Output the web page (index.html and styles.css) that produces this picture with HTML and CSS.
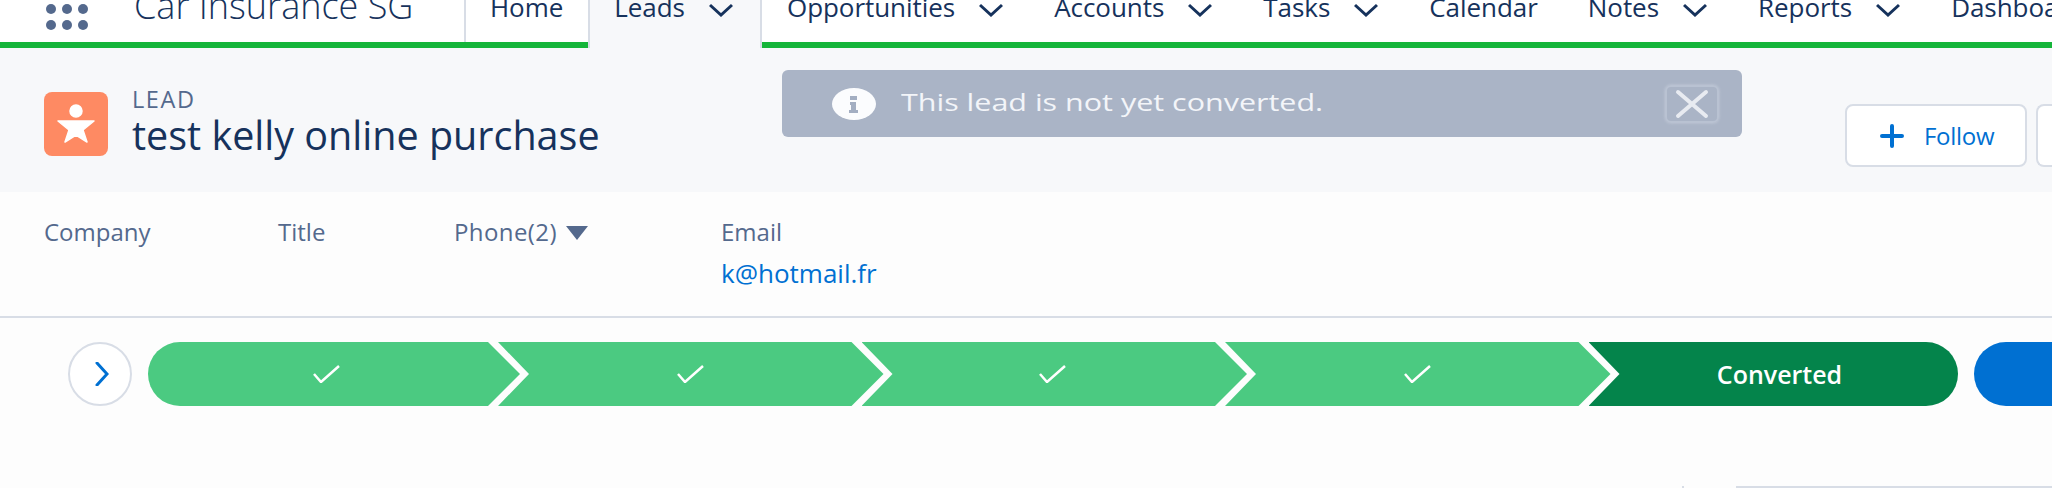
FILE: index.html
```html
<!DOCTYPE html>
<html lang="en">
<head>
  <meta charset="UTF-8">
  <title>test kelly online purchase | Lead</title>
  <link rel="stylesheet" href="styles.css">
</head>
<body>
  <nav class="topnav">
    <div class="launcher">
      <span></span><span></span><span></span><span></span><span></span><span></span>
    </div>
    <div class="app-name">Car Insurance SG</div>
    <ul class="tabs">
      <li class="tab tab-first">Home</li>
      <li class="tab tab-active">Leads<svg class="chev" viewBox="0 0 24 14"><path d="M1 2l11 10L23 2"/></svg></li>
      <li class="tab">Opportunities<svg class="chev" viewBox="0 0 24 14"><path d="M1 2l11 10L23 2"/></svg></li>
      <li class="tab">Accounts<svg class="chev" viewBox="0 0 24 14"><path d="M1 2l11 10L23 2"/></svg></li>
      <li class="tab">Tasks<svg class="chev" viewBox="0 0 24 14"><path d="M1 2l11 10L23 2"/></svg></li>
      <li class="tab">Calendar</li>
      <li class="tab">Notes<svg class="chev" viewBox="0 0 24 14"><path d="M1 2l11 10L23 2"/></svg></li>
      <li class="tab">Reports<svg class="chev" viewBox="0 0 24 14"><path d="M1 2l11 10L23 2"/></svg></li>
      <li class="tab">Dashboards</li>
    </ul>
  </nav>

  <header class="record-head">
    <div class="lead-icon">
      <svg viewBox="0 0 64 64"><circle cx="32" cy="19" r="6"/><path d="M14 29h36l-11 9 4 12-11-7-11 7 4-12z"/></svg>
    </div>
    <div class="record-title">
      <div class="record-type">LEAD</div>
      <h1>test kelly online purchase</h1>
    </div>
    <div class="actions">
      <button class="btn btn-follow"><svg class="plus" viewBox="0 0 24 24"><path d="M12 2v20M2 12h20"/></svg>Follow</button>
      <button class="btn btn-cut"></button>
    </div>
  </header>

  <div class="toast">
    <svg class="toast-icon" viewBox="0 0 44 32"><ellipse cx="22" cy="16" rx="22" ry="16" fill="#fbfcfe"/><path d="M18 8h7v4h-7zM18 14h6v8h2v3h-9v-3h2v-5h-1z" fill="#a3aec2"/></svg>
    <div class="toast-text"><span>This lead is not yet converted.</span></div>
    <div class="toast-close">
      <svg viewBox="0 0 50 34"><path d="M11 5l28 24M39 5L11 29"/></svg>
    </div>
  </div>

  <section class="fields">
    <div class="field field-company"><div class="field-label">Company</div></div>
    <div class="field field-title"><div class="field-label">Title</div></div>
    <div class="field field-phone"><div class="field-label">Phone(2)<span class="caret"></span></div></div>
    <div class="field"><div class="field-label">Email</div><a class="field-value">k@hotmail.fr</a></div>
  </section>

  <section class="path-row">
    <div class="path-toggle">
      <svg viewBox="0 0 14 24"><path d="M2 1l10 11L2 23"/></svg>
    </div>
    <div class="path">
      <div class="step step-first"><svg class="check" viewBox="0 0 27 18"><path d="M1 9l7 8L26 1"/></svg></div>
      <div class="step"><svg class="check" viewBox="0 0 27 18"><path d="M1 9l7 8L26 1"/></svg></div>
      <div class="step step-third"><svg class="check" viewBox="0 0 27 18"><path d="M1 9l7 8L26 1"/></svg></div>
      <div class="step"><svg class="check" viewBox="0 0 27 18"><path d="M1 9l7 8L26 1"/></svg></div>
      <div class="step step-current">Converted</div>
    </div>
    <button class="path-action"></button>
  </section>

  <div class="bottom-edge">
    <span class="edge-tick"></span>
    <span class="edge-bar"></span>
  </div>
</body>
</html>
```

FILE: styles.css
```css
/* Reset */
* {
  box-sizing: border-box;
  margin: 0;
  padding: 0;
}
html, body {
  height: 488px;
  overflow: hidden;
}
body {
  position: relative;
  display: flex;
  flex-direction: column;
  background-color: #fdfdfd;
  color: #16325c;
  font-family: "Open Sans", Arial, sans-serif;
}

/* Top navigation */
.topnav {
  display: flex;
  flex: none;
  height: 48px;
  padding-left: 46px;
  background-color: #fff;
  border-bottom: 6px solid #15b53a;
}
.launcher {
  display: grid;
  grid-template-columns: repeat(3, 10px);
  grid-auto-rows: 10px;
  gap: 6px;
  align-self: flex-start;
  margin-top: 4px;
}
.launcher span {
  background-color: #54698d;
  border-radius: 50%;
}
.app-name {
  flex: none;
  width: 330px;
  margin: -16px 0 0 46px;
  font-size: 36px;
  font-weight: 300;
  line-height: 44px;
  white-space: nowrap;
}
.tabs {
  display: flex;
  margin-top: -8px;
  list-style: none;
  white-space: nowrap;
}
.tab {
  display: flex;
  align-items: flex-start;
  height: 50px;
  padding: 0 25px;
  font-size: 26px;
  line-height: 30px;
  letter-spacing: -0.05px;
}
.tab-first {
  padding-left: 24px;
  border-left: 2px solid #d8dde6;
}
.tab-active {
  height: 56px;
  padding: 0 26px 0 24px;
  background-color: #f7f8fa;
  border-left: 2px solid #d8dde6;
  border-right: 2px solid #d8dde6;
}
.chev {
  flex: none;
  width: 24px;
  height: 14px;
  margin: 11px 1px 0 24px;
  fill: none;
  stroke: #16325c;
  stroke-width: 3;
}

/* Record header */
.record-head {
  display: flex;
  flex: none;
  height: 144px;
  padding-left: 44px;
  background-color: #f7f8fa;
}
.lead-icon {
  flex: none;
  width: 64px;
  height: 64px;
  margin-top: 44px;
  background-color: #fe8a63;
  border-radius: 8px;
}
.lead-icon svg {
  display: block;
  fill: #fff;
  stroke: #fff;
  stroke-width: 1.5;
  stroke-linejoin: round;
}
.record-title {
  margin: 38px 0 0 24px;
}
.record-type {
  font-size: 23.5px;
  line-height: 26px;
  letter-spacing: 1.6px;
  color: #54698d;
}
.record-title h1 {
  font-size: 39.5px;
  font-weight: 400;
  line-height: 46px;
}
.actions {
  display: flex;
  gap: 9px;
  margin: 56px 0 0 auto;
}
.btn {
  height: 63px;
  background-color: #fff;
  border: 2px solid #d8dde6;
  border-radius: 8px;
}
.btn-follow {
  display: flex;
  align-items: center;
  width: 182px;
  padding-left: 33px;
  color: #0070d2;
  font-family: inherit;
  font-size: 24px;
  letter-spacing: -0.3px;
}
.btn-cut {
  width: 16px;
  border-right: none;
  border-radius: 8px 0 0 8px;
}
.plus {
  width: 24px;
  height: 24px;
  margin-right: 20px;
  fill: none;
  stroke: #0070d2;
  stroke-width: 4;
  stroke-linecap: round;
}

/* Toast sits over the record header */
.toast {
  position: absolute;
  top: 70px;
  left: 782px;
  display: flex;
  align-items: center;
  width: 960px;
  height: 67px;
  padding: 0 23px 0 50px;
  background-color: #aab4c6;
  border-radius: 6px;
  color: #f3f5f9;
}
.toast-icon {
  flex: none;
  width: 44px;
  height: 32px;
}
.toast-text {
  flex: 1;
  margin: -4px 0 0 25px;
  font-size: 24px;
  line-height: 32px;
  white-space: nowrap;
}
.toast-text span {
  display: inline-block;
  transform: scaleX(1.27);
  transform-origin: left center;
}
.toast-close {
  flex: none;
  width: 54px;
  height: 38px;
  border: 2px solid #b9c2d2;
  border-radius: 6px;
  box-shadow: 0 0 3px #c6cddb;
}
.toast-close svg {
  display: block;
  width: 50px;
  height: 34px;
  fill: none;
  stroke: #e8ebf1;
  stroke-width: 4;
  stroke-linecap: round;
}

/* Highlight fields */
.fields {
  display: flex;
  flex: none;
  height: 126px;
  padding: 25px 0 0 44px;
  border-bottom: 2px solid #d8dde6;
}
.field-company { width: 234px; }
.field-title { width: 176px; }
.field-phone { width: 267px; }
.field-label {
  display: flex;
  align-items: center;
  font-size: 24px;
  line-height: 30px;
  color: #54698d;
}
.field-phone .field-label {
  letter-spacing: 0.4px;
}
.field-value {
  display: block;
  margin-top: 11px;
  font-size: 26px;
  line-height: 30px;
  color: #0070d2;
}
.caret {
  width: 0;
  height: 0;
  margin: 2px 0 0 9px;
  border-left: 11px solid transparent;
  border-right: 11px solid transparent;
  border-top: 14px solid #54698d;
}

/* Sales path */
.path-row {
  display: flex;
  flex: none;
  align-items: center;
  height: 64px;
  margin-top: 24px;
  padding-left: 68px;
}
.path-toggle {
  display: flex;
  flex: none;
  align-items: center;
  justify-content: center;
  width: 64px;
  height: 64px;
  background-color: #fff;
  border: 2px solid #d8dde6;
  border-radius: 50%;
}
.path-toggle svg {
  width: 14px;
  height: 24px;
  margin-left: 4px;
  fill: none;
  stroke: #0070d2;
  stroke-width: 3;
  stroke-linecap: round;
}
.path {
  display: flex;
  flex: none;
  width: 1810px;
  height: 64px;
  margin-left: 16px;
  border-radius: 32px;
  overflow: hidden;
}
.step {
  display: flex;
  flex: none;
  align-items: center;
  justify-content: center;
  width: 385.5px;
  height: 64px;
  margin-left: -22px;
  background-color: #4bca81;
  clip-path: polygon(0 0, calc(100% - 32px) 0, 100% 50%, calc(100% - 32px) 100%, 0 100%, 31px 50%);
}
.step-first {
  width: 372px;
  margin-left: 0;
  padding-right: 16px;
  clip-path: polygon(0 0, calc(100% - 32px) 0, 100% 50%, calc(100% - 32px) 100%, 0 100%);
}
.step-third {
  padding-right: 4px;
}
.step-current {
  width: 372px;
  padding-left: 10px;
  background-color: #04844b;
  color: #fff;
  font-size: 25px;
  font-weight: 600;
  clip-path: polygon(0 0, 100% 0, 100% 100%, 0 100%, 31px 50%);
}
.check {
  width: 27px;
  height: 18px;
  fill: none;
  stroke: #fff;
  stroke-width: 2.5;
}
.path-action {
  flex: 1;
  height: 64px;
  margin-left: 16px;
  background-color: #0070d2;
  border: none;
  border-radius: 32px 0 0 32px;
}

/* Top edge of the next card, just visible */
.bottom-edge {
  display: flex;
  height: 2px;
  margin-top: auto;
  padding-left: 1682px;
}
.edge-tick {
  width: 2px;
  background-color: #d8dde6;
}
.edge-bar {
  flex: 1;
  margin-left: 52px;
  background-color: #d8dde6;
}
```
